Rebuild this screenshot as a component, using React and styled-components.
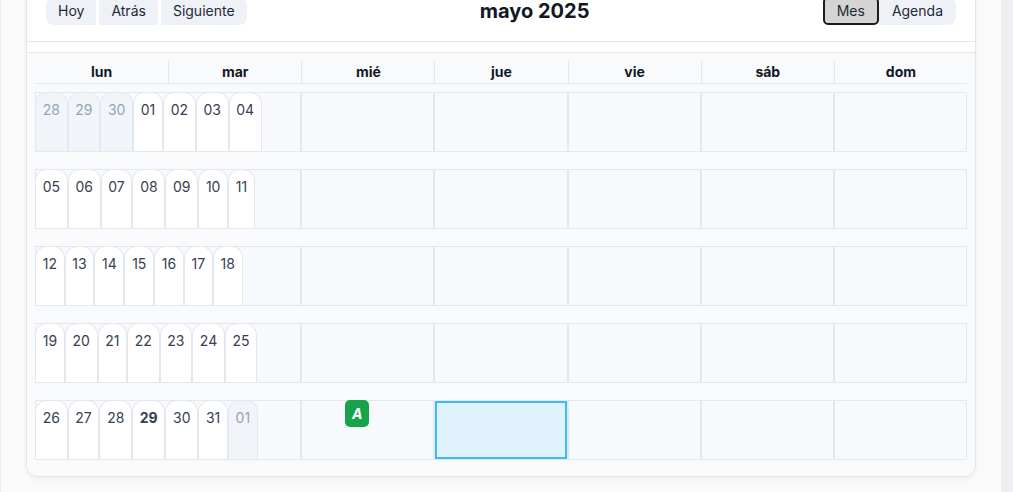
import React from "react";
import styled, { createGlobalStyle } from "styled-components";

const GlobalStyle = createGlobalStyle`
  html, body {
    margin: 0;
    padding: 0;
    height: 100%;
    overflow: hidden;
    font-family: Inter, "Noto Sans", sans-serif;
    color: #1f2937;
  }
`;

const Page = styled.div`
  display: flex;
  height: 100vh;
  background: #fafafa;
`;

const Main = styled.main`
  width: 1001px;
  box-sizing: border-box;
  padding: 0 25px;
  border-left: 1px solid #ececec;
`;

const RightRail = styled.div`
  flex: 1;
  background: #efeff2;
`;

const Card = styled.section`
  margin-top: -21px;
  background: #ffffff;
  border: 1px solid #e2e4e8;
  border-radius: 12px;
  box-shadow: 0 2px 5px rgba(0, 0, 0, 0.06);
  overflow: hidden;
`;

const Toolbar = styled.div`
  display: flex;
  align-items: center;
  padding: 17px 19px 16px;
  border-bottom: 1px solid #e5e7eb;
`;

const Group = styled.div`
  display: flex;
  gap: ${(p) => p.$gap || 0}px;
`;

const ToolButton = styled.button`
  font-family: Inter, sans-serif;
  font-size: 14px;
  line-height: 20px;
  color: #1f2937;
  background: ${(p) => (p.$active ? "#d4d4d4" : "#eef2f7")};
  border: ${(p) => (p.$active ? "2px solid #1c1c1c" : "none")};
  border-radius: ${(p) =>
    p.$active ? "5px" : p.$first ? "8px 0 0 8px" : p.$last ? "0 8px 8px 0" : "0"};
  padding: ${(p) => (p.$active ? "2px 12px" : p.$wide ? "4px 13px" : "4px 12px")};
  cursor: pointer;
`;

const Title = styled.h2`
  flex: 1;
  margin: 0;
  text-align: center;
  font-size: 20px;
  line-height: 24px;
  font-weight: 700;
  color: #111827;
`;

const MonthView = styled.div`
  margin-top: 10px;
  border-top: 1px solid #e5e7eb;
  background: #f9fafb;
  padding: 8px 8px 16px;
`;

const HeaderRow = styled.div`
  display: grid;
  grid-template-columns: repeat(7, 1fr);
  border-bottom: 1px solid #e5e7eb;
  margin-bottom: 8px;
`;

const HeaderCell = styled.div`
  height: 22px;
  line-height: 22px;
  text-align: center;
  font-size: 14px;
  font-weight: 700;
  color: #111827;
  border-left: ${(p) => (p.$first ? "none" : "1px solid #e5e7eb")};
`;

const WeekRow = styled.div`
  display: grid;
  grid-template-columns: repeat(7, 1fr);
  height: 60px;
  margin-bottom: 17px;
  &:last-child {
    margin-bottom: 0;
  }
`;

const DayCell = styled.div`
  grid-column: span ${(p) => p.$span || 1};
  box-sizing: border-box;
  display: flex;
  align-items: flex-start;
  background: ${(p) => (p.$selected ? "#e0f2fe" : "#f7f9fc")};
  border: 1px solid #e5e7eb;
  box-shadow: ${(p) => (p.$selected ? "inset 0 0 0 2px #38bdf8" : "none")};
  padding-left: ${(p) => p.$indent || 0}px;
`;

const Tabs = styled.div`
  display: flex;
  align-self: stretch;
  margin-top: -1px;
  margin-left: -1px;
`;

const DateTab = styled.div`
  box-sizing: border-box;
  padding: 7px 6.7px 0;
  font-size: 14px;
  line-height: 20px;
  font-weight: ${(p) => (p.$today ? 700 : 400)};
  color: ${(p) => (p.$off ? "#94a3b8" : "#374151")};
  background: ${(p) => (p.$off ? "#f1f5f9" : "#ffffff")};
  border: 1px solid #e2e8f0;
  border-bottom: none;
  border-radius: 12px 12px 0 0;
`;

const EventBadge = styled.div`
  margin-top: -1px;
  width: 24px;
  height: 27px;
  border-radius: 5px;
  background: #16a34a;
  color: #ffffff;
  font-size: 14px;
  font-weight: 700;
  font-style: italic;
  display: flex;
  align-items: center;
  justify-content: center;
`;

const dayNames = ["lun", "mar", "mié", "jue", "vie", "sáb", "dom"];

const weeks = [
  [["28", true], ["29", true], ["30", true], ["01"], ["02"], ["03"], ["04"]],
  [["05"], ["06"], ["07"], ["08"], ["09"], ["10"], ["11"]],
  [["12"], ["13"], ["14"], ["15"], ["16"], ["17"], ["18"]],
  [["19"], ["20"], ["21"], ["22"], ["23"], ["24"], ["25"]],
  [["26"], ["27"], ["28"], ["29", false, true], ["30"], ["31"], ["01", true]],
];

export default function App() {
  return (
    <>
      <GlobalStyle />
      <Page>
        <Main>
          <Card>
            <Toolbar>
              <Group $gap={3}>
                <ToolButton $first>Hoy</ToolButton>
                <ToolButton>Atrás</ToolButton>
                <ToolButton $last>Siguiente</ToolButton>
              </Group>
              <Title>mayo 2025</Title>
              <Group>
                <ToolButton $active>Mes</ToolButton>
                <ToolButton $last $wide>Agenda</ToolButton>
              </Group>
            </Toolbar>
            <MonthView>
              <HeaderRow>
                {dayNames.map((d, i) => (
                  <HeaderCell key={d} $first={i === 0}>
                    {d}
                  </HeaderCell>
                ))}
              </HeaderRow>
              {weeks.map((week, wi) => {
                const last = wi === weeks.length - 1;
                return (
                  <WeekRow key={wi}>
                    <DayCell $span={2}>
                      <Tabs>
                        {week.map(([n, off, today], di) => (
                          <DateTab key={di} $off={off} $today={today}>
                            {n}
                          </DateTab>
                        ))}
                      </Tabs>
                    </DayCell>
                    <DayCell $indent={last ? 43 : 0}>
                      {last && <EventBadge>A</EventBadge>}
                    </DayCell>
                    <DayCell $selected={last} />
                    <DayCell />
                    <DayCell />
                    <DayCell />
                  </WeekRow>
                );
              })}
            </MonthView>
          </Card>
        </Main>
        <RightRail />
      </Page>
    </>
  );
}
